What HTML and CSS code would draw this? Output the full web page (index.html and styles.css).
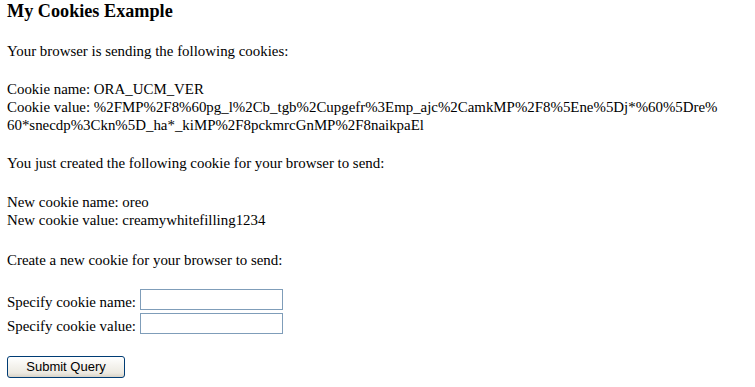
FILE: index.html
```html
<!DOCTYPE html>
<html>
<head>
<meta charset="utf-8">
<title>My Cookies Example</title>
<link rel="stylesheet" href="styles.css">
</head>
<body>
<div class="page">
  <h3 class="title">My Cookies Example</h3>
  <p class="para">Your browser is sending the following cookies:</p>
  <p class="para nowrap">Cookie name: ORA_UCM_VER<br>Cookie value: %2FMP%2F8%60pg_l%2Cb_tgb%2Cupgefr%3Emp_ajc%2CamkMP%2F8%5Ene%5Dj*%60%5Dre%<br>60*snecdp%3Ckn%5D_ha*_kiMP%2F8pckmrcGnMP%2F8naikpaEl</p>
  <p class="para">You just created the following cookie for your browser to send:</p>
  <p class="para para-new">New cookie name: oreo<br>New cookie value: creamywhitefilling1234</p>
  <p class="para para-create">Create a new cookie for your browser to send:</p>
  <form class="cookie-form" action="#" onsubmit="return false;">
    <div class="row"><label class="label" for="cname">Specify cookie name:</label><input class="field" id="cname" type="text"></div>
    <div class="row"><label class="label" for="cvalue">Specify cookie value:</label><input class="field" id="cvalue" type="text"></div>
    <button class="submit" type="submit">Submit Query</button>
  </form>
</div>
</body>
</html>
```
FILE: styles.css
```css
html, body {
  margin: 0;
  padding: 0;
  background: #ffffff;
}

.page {
  padding: 0 7px;
  font-family: "Liberation Serif", "Times New Roman", serif;
  font-size: 14.9px;
  line-height: 18px;
  color: #000000;
}

.title {
  margin: 0;
  font-size: 18.2px;
  line-height: 22px;
  font-weight: bold;
}

.para {
  margin: 20px 0 0 0;
}

.nowrap {
  white-space: nowrap;
}

.para-new {
  margin-top: 21px;
}

.para-create {
  margin-top: 22px;
}

.cookie-form {
  margin: 20px 0 0 0;
}

.row {
  display: flex;
  align-items: flex-start;
  height: 24px;
}

.label {
  padding-top: 4px;
}

.field {
  box-sizing: border-box;
  width: 143px;
  height: 21px;
  margin: 0 0 0 4px;
  padding: 1px 2px;
  border: 1px solid #7f9db9;
  background: #ffffff;
  font-family: "Liberation Sans", Arial, sans-serif;
  font-size: 13px;
  outline: none;
}

.submit {
  display: block;
  box-sizing: border-box;
  width: 118px;
  height: 22px;
  margin: 19px 0 0 0;
  padding: 0;
  border: 1px solid #003c74;
  border-radius: 3px;
  background: linear-gradient(#ffffff 0%, #f5f4ef 40%, #ece9e1 80%, #d8d2c6 100%);
  font-family: "Liberation Sans", Arial, sans-serif;
  font-size: 13px;
  color: #000000;
  line-height: 20px;
}
```
